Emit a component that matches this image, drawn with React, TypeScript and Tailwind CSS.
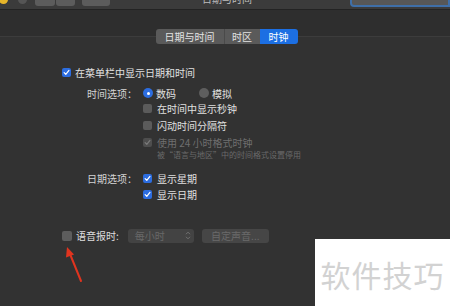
import React from "react";

const font = { fontFamily: '"Noto Sans CJK SC", "Noto Sans", sans-serif' };

function Check({ on, disabled }: { on?: boolean; disabled?: boolean }) {
  if (on) {
    return (
      <span
        className={`flex h-[9px] w-[9px] items-center justify-center rounded-[2px] ${
          disabled ? "bg-[#4e4e4e]" : "bg-[#2c6de0]"
        }`}
      >
        <svg width="7" height="7" viewBox="0 0 8 8">
          <path
            d="M1.3 4.2 L3.2 6.1 L6.8 1.6"
            fill="none"
            stroke={disabled ? "#7a7a7a" : "#fff"}
            strokeWidth="1.4"
            strokeLinecap="round"
            strokeLinejoin="round"
          />
        </svg>
      </span>
    );
  }
  return <span className="h-[9px] w-[9px] rounded-[2px] bg-[#5b5b5b]" />;
}

function Radio({ on }: { on?: boolean }) {
  return on ? (
    <span className="flex h-[10px] w-[10px] items-center justify-center rounded-full bg-[#2c6de0]">
      <span className="h-[3px] w-[3px] rounded-full bg-white" />
    </span>
  ) : (
    <span className="h-[10px] w-[10px] rounded-full bg-[#5e5e5e]" />
  );
}

function Row({ label, children, h = "h-[14px]" }: { label?: string; children: React.ReactNode; h?: string }) {
  return (
    <div className={`flex ${h} items-center`}>
      <div className="w-[80px] pr-[3px] text-right text-[10px] text-[#d4d4d4]">{label}</div>
      <div className="ml-[3px] flex items-center gap-[5px] text-[10px]">{children}</div>
    </div>
  );
}

export default function App() {
  return (
    <div className="relative h-[306px] w-[450px] overflow-hidden bg-[#2e2e2e]" style={font}>
      {/* toolbar, cut off at the top */}
      <div className="h-[10px] overflow-hidden border-b border-[#232323] bg-[#3b3b3b]">
        <div className="-mt-[5px] flex items-start">
          <span className="ml-[-1px] h-[9px] w-[9px] rounded-full bg-[#e6b52a]" />
          <span className="ml-[10px] h-[9px] w-[9px] rounded-full bg-[#555]" />
          <span className="ml-[8px] h-[11px] w-[20px] rounded-[3px] bg-[#5c5c5c]" />
          <span className="ml-[1px] h-[11px] w-[19px] rounded-[3px] bg-[#5c5c5c]" />
          <span className="ml-[7px] h-[11px] w-[28px] rounded-[3px] bg-[#5c5c5c]" />
          <span className="ml-[92px] -mt-[2px] text-[10px] leading-[12px] text-[#bdbdbd]">日期与时间</span>
          <span className="ml-auto h-[12px] w-[100px] rounded-l-[4px] border-[2px] border-[#3f6fa8] bg-[#575757]" />
        </div>
      </div>

      <div className="h-[26px]" />

      {/* tab box */}
      <div className="h-[270px] border-t border-[#3c3c3c] bg-[#323232]">
        <div className="-mt-[8px] flex justify-center">
          <div className="ml-[3px] flex h-[15px] overflow-hidden rounded-[3px] text-[10px] leading-[15px] text-[#e2e2e2]">
            <span className="w-[68px] bg-[#5a5a5a] text-center">日期与时间</span>
            <span className="w-[36px] border-l border-[#4a4a4a] bg-[#5a5a5a] text-center">时区</span>
            <span className="w-[38px] bg-[#1c6fe3] text-center text-white">时钟</span>
          </div>
        </div>

        <div className="mt-[21px] flex h-[14px] items-center gap-[4px] pl-[62px] text-[10px] text-[#e0e0e0]">
          <Check on />
          <span>在菜单栏中显示日期和时间</span>
        </div>

        <div className="mt-[7px] pl-[60px]">
          <Row label="时间选项：">
            <Radio on />
            <span className="-ml-[2px] text-[#e0e0e0]">数码</span>
            <span className="ml-[18px] flex">
              <Radio />
            </span>
            <span className="-ml-[2px] text-[#e0e0e0]">模拟</span>
          </Row>
          <div className="mt-[1px]">
            <Row>
              <Check />
              <span className="text-[#e0e0e0]">在时间中显示秒钟</span>
            </Row>
          </div>
          <div className="mt-[3px]">
            <Row>
              <Check />
              <span className="text-[#e0e0e0]">闪动时间分隔符</span>
            </Row>
          </div>
          <div className="mt-[3px]">
            <Row>
              <Check on disabled />
              <span className="text-[#6f6f6f]">使用 24 小时格式时钟</span>
            </Row>
          </div>
          <div className="flex h-[12px] items-center pl-[97px] text-[8px] text-[#6a6a6a]">
            被“语言与地区”中的时间格式设置停用
          </div>

          <div className="mt-[10px]">
            <Row label="日期选项：">
              <Check on />
              <span className="text-[#e0e0e0]">显示星期</span>
            </Row>
          </div>
          <div className="mt-[2px]">
            <Row>
              <Check on />
              <span className="text-[#e0e0e0]">显示日期</span>
            </Row>
          </div>
        </div>

        <div className="mt-[27px] flex h-[15px] items-center pl-[62px] text-[10px]">
          <span className="h-[10px] w-[10px] rounded-[2px] bg-[#5d5d5d]" />
          <span className="ml-[4px] text-[#dedede]">语音报时:</span>
          <div className="ml-[9px] flex h-[14px] w-[66px] items-center justify-between rounded-[3px] bg-[#434343] pl-[7px] pr-[3px] text-[#686868]">
            <span>每小时</span>
            <svg width="6" height="9" viewBox="0 0 6 9">
              <path d="M1 3.2 L3 1.2 L5 3.2 M1 5.8 L3 7.8 L5 5.8" fill="none" stroke="#777" strokeWidth="0.9" />
            </svg>
          </div>
          <div className="ml-[8px] flex h-[14px] w-[67px] items-center justify-center rounded-[3px] bg-[#464646] text-[#6a6a6a]">
            自定声音...
          </div>
        </div>
      </div>

      {/* red arrow annotation */}
      <svg className="absolute left-[60px] top-[244px]" width="30" height="40" viewBox="0 0 30 40">
        <path d="M21 37 L10 10" stroke="#e0341f" strokeWidth="2" strokeLinecap="round" />
        <path d="M7 3 L14 10.5 L6 13.5 Z" fill="#e0341f" />
      </svg>

      {/* watermark */}
      <div className="absolute left-[315px] top-[239px] flex h-[67px] w-[135px] items-center justify-center bg-white">
        <span className="mt-[2px] text-[30px] leading-none tracking-[1px] text-[#d2d2d2]">软件技巧</span>
      </div>
    </div>
  );
}
